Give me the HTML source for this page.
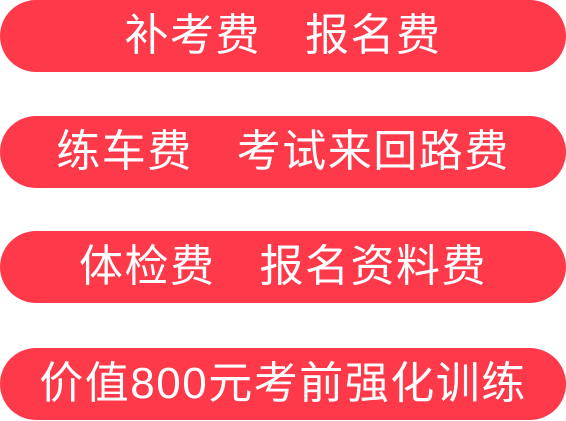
<!DOCTYPE html>
<html><head><meta charset="utf-8"><style>
html,body{margin:0;padding:0;background:#fff;width:566px;height:421px;overflow:hidden}
.b{position:absolute;left:0;width:566px;height:72px;border-radius:36px;background:#fe3a4a;color:#fff;
font-family:"Liberation Sans","Noto Sans CJK SC",sans-serif;font-size:44px;line-height:72px;text-align:center;letter-spacing:1.5px;white-space:pre}
.g{display:inline-block;width:44px}
</style></head><body>
<div class="b" style="top:0">补考费<span class="g"></span>报名费</div>
<div class="b" style="top:116px">练车费<span class="g"></span>考试来回路费</div>
<div class="b" style="top:231px">体检费<span class="g"></span>报名资料费</div>
<div class="b" style="top:348px">价值800元考前强化训练</div>
</body></html>
